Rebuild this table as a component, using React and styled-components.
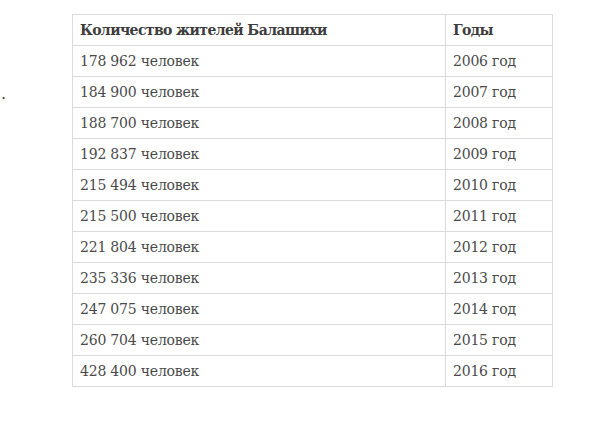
import React from "react";
import styled, { createGlobalStyle } from "styled-components";

const Global = createGlobalStyle`
  html, body { margin: 0; padding: 0; background: #fff; }
  body { font-family: "DejaVu Serif", "Liberation Serif", serif; }
`;

const Page = styled.div`
  display: flex;
  align-items: flex-start;
  width: 604px;
  height: 427px;
  overflow: hidden;
  padding-top: 14px;
  box-sizing: border-box;
`;

const Fragment = styled.div`
  width: 72px;
  padding-left: 1px;
  box-sizing: border-box;
  padding-top: 70px;
  font-size: 16px;
  line-height: 20px;
  color: #444;
`;

const Table = styled.table`
  border-collapse: collapse;
  width: 481px;
  table-layout: fixed;
  color: #4a4a4a;
  font-size: 14px;
`;

const Th = styled.th`
  text-align: left;
  font-weight: bold;
  border: 1px solid #dcdcdc;
  height: 30px;
  padding: 0 7px;
  color: #3d3d3d;
  letter-spacing: -0.6px;
  width: ${(p) => p.$w || "auto"};
`;

const Td = styled.td`
  border: 1px solid #dcdcdc;
  height: 30px;
  padding: 0 7px;
  letter-spacing: -0.2px;
`;

const rows = [
  ["178 962", "2006"],
  ["184 900", "2007"],
  ["188 700", "2008"],
  ["192 837", "2009"],
  ["215 494", "2010"],
  ["215 500", "2011"],
  ["221 804", "2012"],
  ["235 336", "2013"],
  ["247 075", "2014"],
  ["260 704", "2015"],
  ["428 400", "2016"],
];

export default function App() {
  return (
    <>
      <Global />
      <Page>
        <Fragment>.</Fragment>
        <Table>
          <thead>
            <tr>
              <Th $w="358px">Количество жителей Балашихи</Th>
              <Th>Годы</Th>
            </tr>
          </thead>
          <tbody>
            {rows.map(([n, y]) => (
              <tr key={y}>
                <Td>{n} человек</Td>
                <Td>{y} год</Td>
              </tr>
            ))}
          </tbody>
        </Table>
      </Page>
    </>
  );
}
